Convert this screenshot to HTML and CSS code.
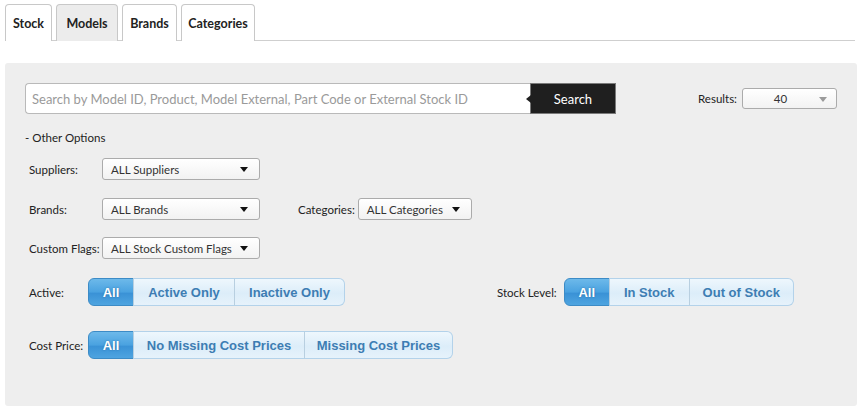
FILE: index.html
```html
<!DOCTYPE html>
<html>
<head>
<meta charset="utf-8">
<link rel="stylesheet" href="styles.css">
</head>
<body>
<div class="tabs">
  <div class="tab t-stock">Stock</div>
  <div class="tab tab-grey t-models">Models</div>
  <div class="tab t-brands">Brands</div>
  <div class="tab t-cats">Categories</div>
</div>
<div class="panel">
  <div class="search-row">
    <div class="search-box">
      <div class="search-input">Search by Model ID, Product, Model External, Part Code or External Stock ID</div>
      <div class="search-btn">Search</div>
    </div>
    <div class="results">
      <span class="results-label">Results:</span>
      <div class="select select-results"><span>40</span><i class="caret caret-grey"></i></div>
    </div>
  </div>
  <div class="other">- Other Options</div>
  <div class="row row-suppliers">
    <span class="label">Suppliers:</span>
    <div class="select select-wide"><span>ALL Suppliers</span><i class="caret"></i></div>
  </div>
  <div class="row row-brands">
    <span class="label">Brands:</span>
    <div class="select select-wide"><span>ALL Brands</span><i class="caret"></i></div>
    <span class="label-cat">Categories:</span>
    <div class="select select-cat"><span>ALL Categories</span><i class="caret"></i></div>
  </div>
  <div class="row row-flags">
    <span class="label">Custom Flags:</span>
    <div class="select select-wide"><span>ALL Stock Custom Flags</span><i class="caret"></i></div>
  </div>
  <div class="row row-active">
    <span class="label label-short">Active:</span>
    <div class="group">
      <span class="gbtn on w45">All</span><span class="gbtn w101">Active Only</span><span class="gbtn w110">Inactive Only</span>
    </div>
    <span class="label-stock">Stock Level:</span>
    <div class="group">
      <span class="gbtn on w45">All</span><span class="gbtn w80">In Stock</span><span class="gbtn w104">Out of Stock</span>
    </div>
  </div>
  <div class="row row-cost">
    <span class="label label-short">Cost Price:</span>
    <div class="group">
      <span class="gbtn on w45">All</span><span class="gbtn w171">No Missing Cost Prices</span><span class="gbtn w148">Missing Cost Prices</span>
    </div>
  </div>
</div>
</body>
</html>
```

FILE: styles.css
```css
html, body {
  margin: 0;
  padding: 0;
  background: #fff;
}
body {
  padding: 4px 5px 0 5px;
  font-family: Lato, "Open Sans", sans-serif;
  color: #222;
}
.tabs {
  display: flex;
  gap: 4px;
  border-bottom: 1px solid #cfcfcf;
  height: 36px;
  margin-right: 2px;
}
.tab {
  box-sizing: border-box;
  border: 1px solid #c8c8c8;
  border-bottom: none;
  border-radius: 4px 4px 0 0;
  background: #fff;
  display: flex;
  align-items: center;
  justify-content: center;
  font-size: 12.5px;
  font-weight: bold;
  color: #222;
  margin-bottom: -1px;
  height: 37px;
  white-space: nowrap;
}
.t-stock { width: 47px; }
.t-models { width: 62px; }
.t-brands { width: 55px; }
.t-cats { width: 74px; }
.tab-grey {
  background: #ececec;
}
.panel {
  margin-top: 22px;
  background: #eeeeee;
  border-radius: 3px;
  height: 343px;
  box-sizing: border-box;
  padding: 20px 20px 0 20px;
  font-size: 11.5px;
}
.search-row {
  display: flex;
  align-items: center;
  height: 31px;
}
.search-box {
  display: flex;
  width: 591px;
  height: 31px;
}
.search-input {
  flex: 1;
  box-sizing: border-box;
  background: #fff;
  border: 1px solid #b9b9b9;
  border-right: none;
  border-radius: 4px 0 0 4px;
  padding-left: 6px;
  display: flex;
  align-items: center;
  color: #9a9a9a;
  font-size: 13px;
  white-space: nowrap;
  overflow: hidden;
}
.search-btn {
  position: relative;
  width: 86px;
  background: #1f1f1f;
  color: #fff;
  font-size: 13px;
  display: flex;
  align-items: center;
  justify-content: center;
  border: 1px solid #7a7a7a;
  box-sizing: border-box;
}
.search-btn::before {
  content: "";
  position: absolute;
  left: -5px;
  top: 11px;
  border-top: 4px solid transparent;
  border-bottom: 4px solid transparent;
  border-right: 5px solid #1f1f1f;
}
.results {
  margin-left: auto;
  display: flex;
  align-items: center;
  gap: 5px;
}
.results-label {
  font-size: 11.5px;
  color: #222;
}
.select {
  position: relative;
  height: 22px;
  box-sizing: border-box;
  border: 1px solid #ababab;
  border-radius: 3px;
  background: linear-gradient(#ffffff, #f2f2f2);
  display: flex;
  align-items: center;
  padding-left: 8px;
  color: #333;
  font-size: 11.5px;
  white-space: nowrap;
}
.select-results {
  width: 95px;
  height: 21px;
  padding-left: 0;
  justify-content: center;
}
.select-results span {
  margin-left: -18px;
}
.select-wide {
  width: 158px;
}
.select-cat {
  width: 114px;
}
.caret {
  position: absolute;
  right: 11px;
  top: 8px;
  border-left: 4px solid transparent;
  border-right: 4px solid transparent;
  border-top: 5px solid #111;
}
.caret-grey {
  right: 9px;
  border-top-color: #9a9a9a;
}
.other {
  margin-top: 16px;
  height: 16px;
  line-height: 16px;
}
.row {
  display: flex;
  align-items: center;
  white-space: nowrap;
}
.label {
  flex: 0 0 auto;
  width: 73px;
  padding-left: 4px;
}
.label-short {
  width: 59px;
}
.label-cat {
  margin-left: 38px;
  margin-right: 3px;
}
.label-stock {
  margin-left: 152px;
  margin-right: 7px;
}
.row-suppliers { margin-top: 12px; }
.row-brands { margin-top: 18px; }
.row-flags { margin-top: 17px; }
.row-active { margin-top: 19px; }
.row-cost { margin-top: 25px; }
.group {
  display: flex;
  height: 28px;
}
.gbtn {
  box-sizing: border-box;
  height: 28px;
  display: flex;
  align-items: center;
  justify-content: center;
  font-family: "Liberation Sans", Arial, sans-serif;
  font-weight: bold;
  font-size: 13px;
  color: #3d7db3;
  background: linear-gradient(#eef7fd, #dcedf9 55%, #e6f2fb);
  border: 1px solid #b3d2ea;
  border-left: 1px solid #b8cfe0;
  margin-left: -1px;
}
.gbtn:last-child {
  border-radius: 0 6px 6px 0;
}
.gbtn.on {
  margin-left: 0;
  border-radius: 6px 0 0 6px;
  color: #fff;
  background: linear-gradient(#6db9ea, #4aa2e0 50%, #3a92d6 55%, #4ea4e0);
  border: 1px solid #3c8bc6;
  text-shadow: 0 0 2px #2a6ea3;
}
.w45 { width: 46px; }
.w80 { width: 81px; }
.w101 { width: 102px; }
.w104 { width: 105px; }
.w110 { width: 111px; }
.w148 { width: 149px; }
.w171 { width: 172px; }
```
